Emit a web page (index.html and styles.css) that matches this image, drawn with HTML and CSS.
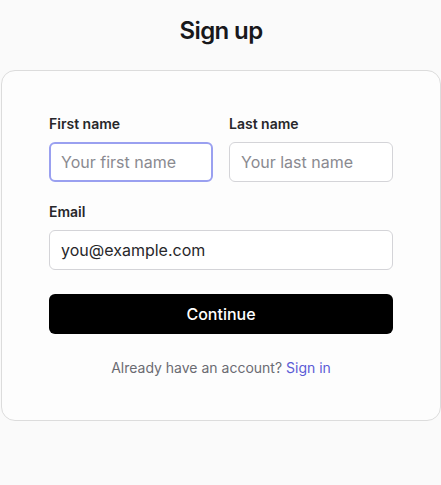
FILE: index.html
```html
<!DOCTYPE html>
<html lang="en">
<head>
<meta charset="utf-8">
<title>Sign up</title>
<link rel="stylesheet" href="styles.css">
</head>
<body>
<main class="page">
  <h1 class="title">Sign up</h1>
  <form class="card">
    <div class="row">
      <div class="field">
        <label class="label" for="first">First name</label>
        <input class="input input-focus" id="first" type="text" placeholder="Your first name">
      </div>
      <div class="field">
        <label class="label" for="last">Last name</label>
        <input class="input" id="last" type="text" placeholder="Your last name">
      </div>
    </div>
    <div class="field">
      <label class="label" for="email">Email</label>
      <input class="input" id="email" type="email" value="you@example.com">
    </div>
    <button class="button" type="button">Continue</button>
    <p class="footer">Already have an account? <a class="link" href="#">Sign in</a></p>
  </form>
</main>
</body>
</html>
```
FILE: styles.css
```css
* { box-sizing: border-box; }
html, body { margin: 0; padding: 0; }
body {
  background: #fafafa;
  font-family: Inter, "Noto Sans", sans-serif;
  color: #18181b;
}
.page {
  padding: 15px 0 0 1px;
  display: flex;
  flex-direction: column;
}
.title {
  margin: 0 0 23px;
  text-align: center;
  font-size: 24px;
  line-height: 32px;
  font-weight: 600;
  letter-spacing: -0.6px;
  color: #18181b;
}
.card {
  width: 440px;
  background: #fdfdfd;
  border: 1px solid #dcdcdc;
  border-radius: 14px;
  padding: 43px 47px 42px;
  display: flex;
  flex-direction: column;
}
.row {
  display: grid;
  grid-template-columns: 1fr 1fr;
  gap: 16px;
  margin-bottom: 20px;
}
.field {
  display: flex;
  flex-direction: column;
  gap: 8px;
}
.label {
  font-size: 14px;
  line-height: 20px;
  font-weight: 600;
  color: #27272a;
}
.input {
  height: 40px;
  width: 100%;
  border: 1px solid #d4d4d8;
  border-radius: 6px;
  background: #ffffff;
  padding: 0 11px;
  font-family: inherit;
  font-size: 16px;
  color: #27272a;
  outline: none;
}
.input::placeholder { color: #8a8a90; }
.input-focus {
  border: 2px solid #9aa0f0;
  padding: 0 10px;
}
.button {
  margin-top: 24px;
  height: 40px;
  border: none;
  border-radius: 6px;
  background: #000000;
  color: #ffffff;
  font-family: inherit;
  font-size: 16px;
  font-weight: 500;
}
.footer {
  margin: 24px 0 0;
  text-align: center;
  font-size: 14px;
  line-height: 20px;
  color: #6b6b72;
}
.link {
  color: #5b5bd6;
  text-decoration: none;
}
```
